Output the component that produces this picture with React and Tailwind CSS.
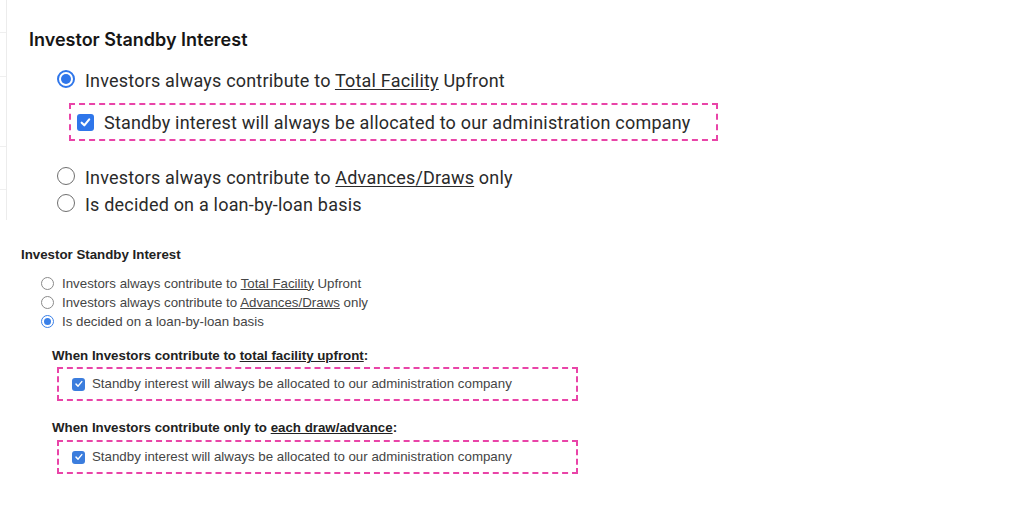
import React from "react";

function Radio({ checked, size = 18, small = false }) {
  if (checked) {
    return (
      <span
        className={`shrink-0 rounded-full flex items-center justify-center bg-white ${
          small ? "border-[1.5px] border-[#3a80e8]" : "border-2 border-[#2f76ea]"
        }`}
        style={{ width: size, height: size }}
      >
        <span
          className={`rounded-full ${small ? "bg-[#3a80e8]" : "bg-[#2f76ea]"}`}
          style={{ width: size * 0.6, height: size * 0.6 }}
        />
      </span>
    );
  }
  return (
    <span
      className={`shrink-0 rounded-full bg-white ${
        small ? "border border-[#8a8a8a]" : "border-[1.5px] border-[#6f6f6f]"
      }`}
      style={{ width: size, height: size }}
    />
  );
}

function Check({ size = 17, small = false }) {
  return (
    <span
      className={`shrink-0 flex items-center justify-center ${
        small ? "rounded-[3px] bg-[#3b7ddd]" : "rounded-[3px] bg-[#2f76ea]"
      }`}
      style={{ width: size, height: size }}
    >
      <svg
        width={size * 0.75}
        height={size * 0.75}
        viewBox="0 0 12 12"
        fill="none"
        stroke="white"
        strokeWidth={small ? 1.8 : 2}
        strokeLinecap="round"
        strokeLinejoin="round"
      >
        <path d="M2.5 6.3 L5 8.8 L9.6 3.2" />
      </svg>
    </span>
  );
}

export default function App() {
  return (
    <div className="relative w-[1010px] h-[510px] bg-white overflow-hidden flex">
      {/* cropped left edge of neighbouring table */}
      <div className="w-[7px] h-[220px] border-r border-[#ececec] flex flex-col shrink-0">
        <div className="h-[33px] border-b border-[#efefef]" />
        <div className="h-[44px] border-b border-[#efefef]" />
        <div className="h-[70px] border-b border-[#efefef]" />
        <div className="h-[43px] border-b border-[#efefef]" />
        <div className="flex-1" />
      </div>

      <div className="flex flex-col">
        {/* Top, large version */}
        <div className="pl-[22px] pt-[30px] font-['Roboto',sans-serif] text-[#2a2a2a]">
          <div className="font-['Inter',sans-serif] font-semibold text-[18px] leading-[20px] text-[#161616]">
            Investor Standby Interest
          </div>
          <div className="ml-[28px] mt-[17px] flex items-center gap-[10px] h-[24px] text-[18px] tracking-[0.2px]">
            <Radio checked size={18} />
            <span className="mt-[2px]">
              Investors always contribute to <span className="underline underline-offset-2">Total Facility</span> Upfront
            </span>
          </div>
          <div className="ml-[40px] mt-[12px] w-[649px] h-[38px] border-2 border-dashed border-[#e944a8] flex items-center pl-[6px] gap-[10px] text-[18px] tracking-[0.2px]">
            <Check size={17} />
            <span className="mt-[1px]">Standby interest will always be allocated to our administration company</span>
          </div>
          <div className="ml-[28px] mt-[23px] flex items-center gap-[10px] h-[24px] text-[18px] tracking-[0.2px]">
            <Radio size={18} />
            <span className="mt-[3px]">
              Investors always contribute to <span className="underline underline-offset-2">Advances/Draws</span> only
            </span>
          </div>
          <div className="ml-[28px] mt-[3px] flex items-center gap-[10px] h-[24px] text-[18px] tracking-[0.2px]">
            <Radio size={18} />
            <span className="mt-[3px]">Is decided on a loan-by-loan basis</span>
          </div>
        </div>

        {/* Bottom, small version */}
        <div className="pl-[14px] mt-[32px] font-['Liberation_Sans',Arial,sans-serif] text-[#454545]">
          <div className="font-bold text-[13.3px] leading-[16px] text-[#222]">Investor Standby Interest</div>
          <div className="ml-[20px] mt-[14px] flex flex-col gap-[6px] text-[13.3px]">
            <div className="flex items-center gap-[8px] h-[13px]">
              <Radio size={13} small />
              <span>
                Investors always contribute to <span className="underline">Total Facility</span> Upfront
              </span>
            </div>
            <div className="flex items-center gap-[8px] h-[13px]">
              <Radio size={13} small />
              <span>
                Investors always contribute to <span className="underline">Advances/Draws</span> only
              </span>
            </div>
            <div className="flex items-center gap-[8px] h-[13px]">
              <Radio checked size={13} small />
              <span>Is decided on a loan-by-loan basis</span>
            </div>
          </div>

          <div className="ml-[31px] mt-[20px] font-bold text-[13.3px] leading-[16px] text-[#222]">
            When Investors contribute to <span className="underline">total facility upfront</span>:
          </div>
          <div className="ml-[36px] mt-[3px] w-[521px] h-[34px] border-2 border-dashed border-[#e944a8] flex items-center pl-[13px] gap-[7px] text-[13.3px]">
            <Check size={13} small />
            <span>Standby interest will always be allocated to our administration company</span>
          </div>

          <div className="ml-[31px] mt-[19px] font-bold text-[13.3px] leading-[16px] text-[#222]">
            When Investors contribute only to <span className="underline">each draw/advance</span>:
          </div>
          <div className="ml-[36px] mt-[4px] w-[521px] h-[34px] border-2 border-dashed border-[#e944a8] flex items-center pl-[13px] gap-[7px] text-[13.3px]">
            <Check size={13} small />
            <span>Standby interest will always be allocated to our administration company</span>
          </div>
        </div>
      </div>
    </div>
  );
}
